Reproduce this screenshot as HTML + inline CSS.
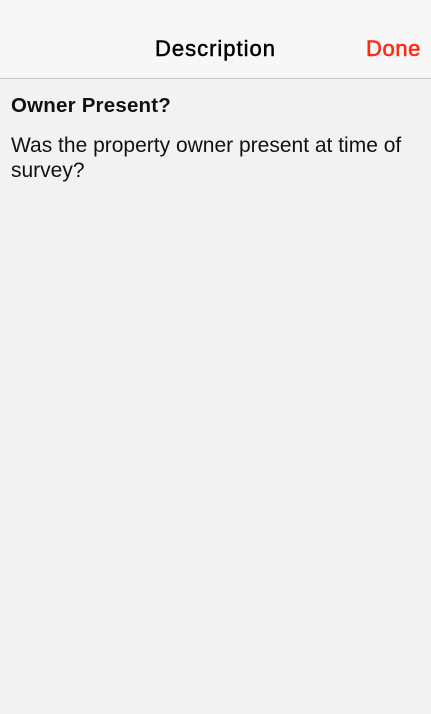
<!DOCTYPE html>
<html><head><style>
html,body{margin:0;padding:0;width:431px;height:714px;background:#f2f2f2;font-family:"Liberation Sans",sans-serif;overflow:hidden}
.nav{position:absolute;left:0;top:0;width:431px;height:78px;background:#f7f7f7;border-bottom:1px solid #c8c8c8}
.title{position:absolute;left:0;width:431px;top:36px;text-align:center;font-size:22px;color:#000;line-height:26px;letter-spacing:1px;-webkit-text-stroke:0.5px #000}
.done{position:absolute;right:10px;top:36px;font-size:22px;color:#ff2a12;line-height:26px;letter-spacing:0.6px;-webkit-text-stroke:0.6px #ff2a12}
.h{position:absolute;left:11px;top:94px;font-size:20.5px;font-weight:bold;color:#111;line-height:24px;letter-spacing:0.2px}
.p{position:absolute;left:11px;top:133px;width:415px;font-size:21px;color:#111;line-height:25px}
</style></head><body>
<div class="nav"><div class="title">Description</div><div class="done">Done</div></div>
<div class="h">Owner Present?</div>
<div class="p">Was the property owner present at time of survey?</div>
</body></html>
